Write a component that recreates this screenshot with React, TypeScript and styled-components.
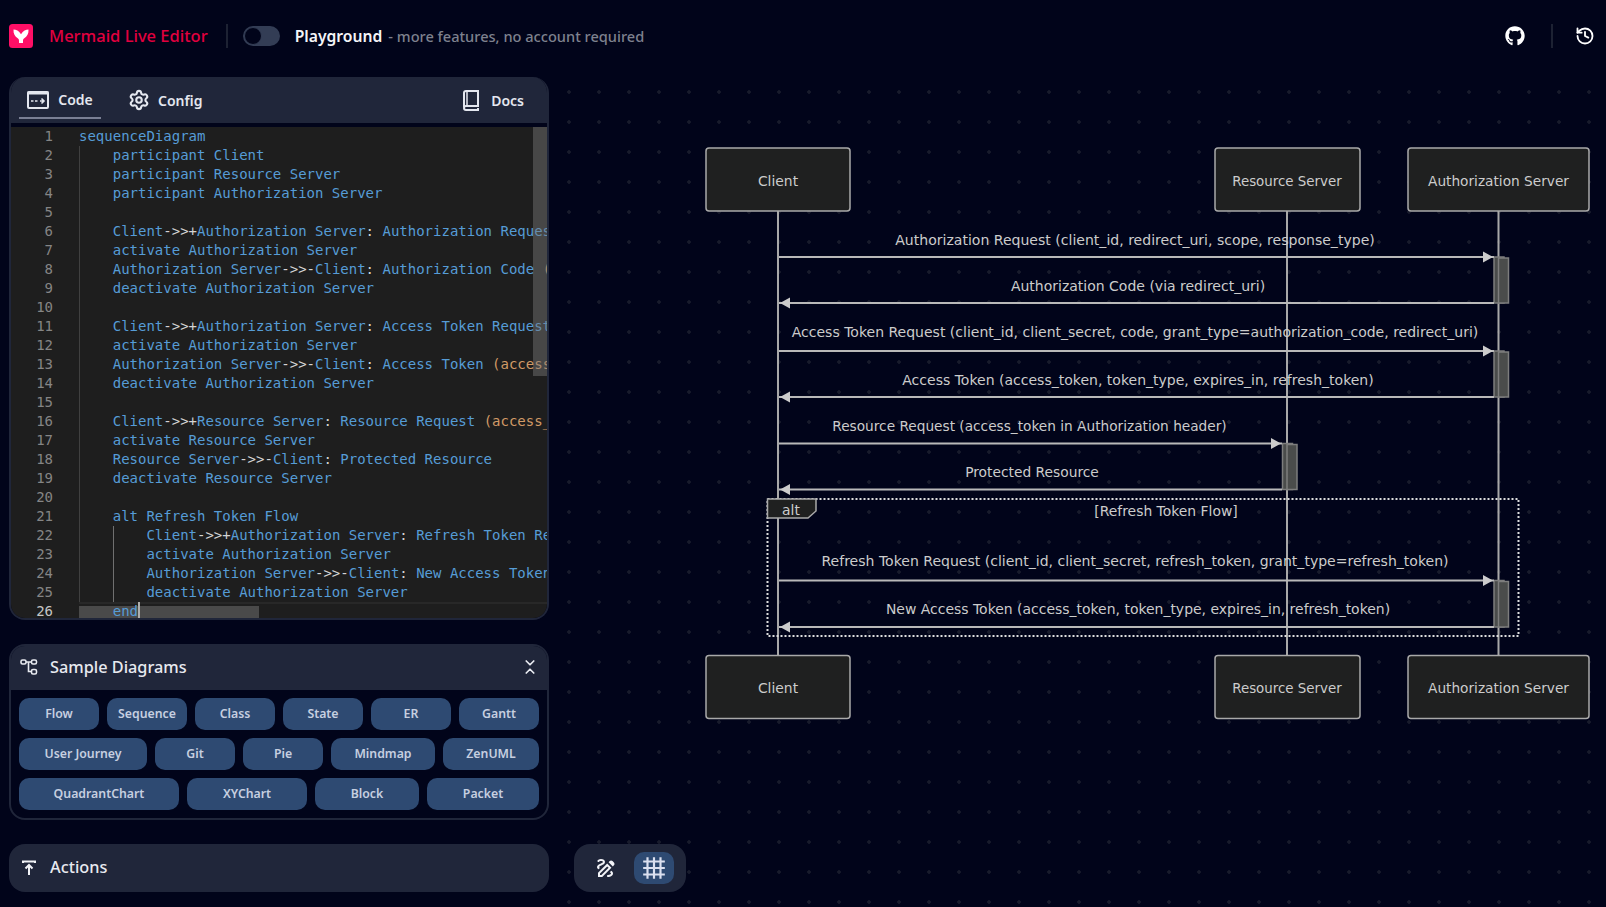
import styled, { createGlobalStyle } from "styled-components";
import { ChevronsDownUp, History, Settings } from "lucide-react";
import { FaGithub } from "react-icons/fa";
import { MdGrid4X4, MdOutlineDraw } from "react-icons/md";

const GlobalStyle = createGlobalStyle`
	html, body {
		margin: 0;
		height: 100%;
		background: #01041a;
		overflow: hidden;
	}
	* {
		box-sizing: border-box;
	}
`;

const CODE = [
	"sequenceDiagram",
	"    participant Client",
	"    participant Resource Server",
	"    participant Authorization Server",
	"",
	"    Client->>+Authorization Server: Authorization Request (client_id, redirect_uri, scope, response_type)",
	"    activate Authorization Server",
	"    Authorization Server->>-Client: Authorization Code (via redirect_uri)",
	"    deactivate Authorization Server",
	"",
	"    Client->>+Authorization Server: Access Token Request (client_id, client_secret, code)",
	"    activate Authorization Server",
	"    Authorization Server->>-Client: Access Token (access_token, token_type, expires_in, refresh_token)",
	"    deactivate Authorization Server",
	"",
	"    Client->>+Resource Server: Resource Request (access_token in Authorization header)",
	"    activate Resource Server",
	"    Resource Server->>-Client: Protected Resource",
	"    deactivate Resource Server",
	"",
	"    alt Refresh Token Flow",
	"        Client->>+Authorization Server: Refresh Token Request (client_id, client_secret)",
	"        activate Authorization Server",
	"        Authorization Server->>-Client: New Access Token (access_token, token_type)",
	"        deactivate Authorization Server",
	"    end",
];

const SAMPLE_ROWS = [
	[["Flow", 80], ["Sequence", 80], ["Class", 80], ["State", 80], ["ER", 80], ["Gantt", 80]],
	[["User Journey", 128], ["Git", 80], ["Pie", 80], ["Mindmap", 104], ["ZenUML", 96]],
	[["QuadrantChart", 160], ["XYChart", 120], ["Block", 104], ["Packet", 112]],
] as [string, number][][];

const ACTORS = [
	{ name: "Client", x: 706, w: 144, cx: 778, size: 13.9 },
	{ name: "Resource Server", x: 1215, w: 145, cx: 1287, size: 13.4 },
	{ name: "Authorization Server", x: 1408, w: 181, cx: 1498.5, size: 13.7 },
];

const MESSAGES = [
	{ text: "Authorization Request (client_id, redirect_uri, scope, response_type)", cx: 1135, base: 245, y: 257, x2: 1494, right: true, size: 14.05 },
	{ text: "Authorization Code (via redirect_uri)", cx: 1138, base: 291, y: 303, x2: 1494, right: false, size: 14 },
	{ text: "Access Token Request (client_id, client_secret, code, grant_type=authorization_code, redirect_uri)", cx: 1135, base: 337, y: 351, x2: 1494, right: true, size: 14.03 },
	{ text: "Access Token (access_token, token_type, expires_in, refresh_token)", cx: 1138, base: 385, y: 397, x2: 1494, right: false, size: 14.02 },
	{ text: "Resource Request (access_token in Authorization header)", cx: 1029.5, base: 431, y: 443.5, x2: 1282, right: true, size: 13.7 },
	{ text: "Protected Resource", cx: 1032, base: 477, y: 489.5, x2: 1282, right: false, size: 13.8 },
	{ text: "Refresh Token Request (client_id, client_secret, refresh_token, grant_type=refresh_token)", cx: 1135, base: 566, y: 580.5, x2: 1494, right: true, size: 14.04 },
	{ text: "New Access Token (access_token, token_type, expires_in, refresh_token)", cx: 1138, base: 614, y: 627, x2: 1494, right: false, size: 13.96 },
];

const ACTIVATIONS = [
	{ x: 1494, y: 257, h: 46 },
	{ x: 1494, y: 351, h: 46 },
	{ x: 1282.5, y: 443.5, h: 46 },
	{ x: 1494, y: 580.5, h: 46.5 },
];

// colours the arrows and the bracketed part like the monaco mermaid grammar
const renderTokens = (line: string) =>
	line.split(/(->>|[+:]|-(?=Client)|\(.*\))/).map((part, i) => {
		if (part.startsWith("(")) return <Paren key={i}>{part}</Paren>;
		if (/^(->>|\+|:|-)$/.test(part)) return <Operator key={i}>{part}</Operator>;
		return part;
	});

const App = () => {
	return (
		<Page>
			<GlobalStyle />
			<Header>
				<LogoIcon viewBox="0 0 24 24">
					<rect width="24" height="24" rx="3.5" fill="#ff0f66" />
					<path
						d="M4.5 5.500c2.600 0 5.400 1.400 7.500 4.800C14.100 6.900 16.900 5.500 19.500 5.500c.3 4.200-1.500 7.200-4.200 8.800-.9.600-1.300 1.400-1.300 2.400v2.300h-4v-2.300c0-1-.4-1.800-1.300-2.400C6 12.700 4.200 9.700 4.500 5.500z"
						fill="#fff"
					/>
				</LogoIcon>
				<Title>Mermaid Live Editor</Title>
				<TitleDivider />
				<Toggle>
					<Knob />
				</Toggle>
				<Playground>Playground</Playground>
				<Tagline>- more features, no account required</Tagline>
				<HeaderRight>
					<FaGithub size={20} />
					<RightDivider />
					<History size={20} strokeWidth={2.2} />
				</HeaderRight>
			</Header>

			<Main>
				<Sidebar>
					<EditorPanel>
						<Tabs>
							<Tab $active>
								<svg width="22" height="18" viewBox="0 0 22 18" fill="none" stroke="currentColor">
									<rect x="1" y="1" width="20" height="16" rx="1" strokeWidth="2" />
									<rect x="1" y="1" width="20" height="2" fill="currentColor" strokeWidth="1" />
									<path d="M4 10h2.500M8 10h2.500M13 10h3.500M14.500 7.500l2.500 2.500-2.500 2.500" strokeWidth="1.600" />
								</svg>
								Code
							</Tab>
							<Tab>
								<Settings size={22} strokeWidth={2.3} />
								Config
							</Tab>
							<DocsLink>
								<svg width="18" height="21" viewBox="0 0 18 21" fill="none" stroke="currentColor" strokeWidth="2">
									<path d="M2 17V3a2 2 0 0 1 2-2h12v15H4a2 2 0 0 0-2 2 2 2 0 0 0 2 2h12v-2" />
									<path d="M5 1v15" strokeWidth="1.500" />
								</svg>
								Docs
							</DocsLink>
						</Tabs>
						<Editor>
							<Gutter>
								{CODE.map((_, i) => (
									<LineNumber key={i} $current={i === CODE.length - 1}>
										{i + 1}
									</LineNumber>
								))}
							</Gutter>
							<CodeArea>
								<OuterGuide />
								<InnerGuide />
								<CurrentLine />
								<Selection />
								<Caret />
								{CODE.map((line, i) => (
									<CodeLine key={i}>{renderTokens(line)}</CodeLine>
								))}
							</CodeArea>
							<ScrollThumb />
						</Editor>
					</EditorPanel>

					<SamplePanel>
						<PanelHeader>
							<svg width="18" height="18" viewBox="0 0 18 18" fill="none" stroke="currentColor" strokeWidth="1.600">
								<rect x="1" y="2" width="5" height="4" rx="1.500" />
								<rect x="11.500" y="2" width="5" height="4" rx="1.500" />
								<rect x="11.500" y="11.500" width="5" height="4.500" rx="1.500" />
								<path d="M6 4h5.500M8.500 4v9.500h3" />
							</svg>
							<PanelTitle>Sample Diagrams</PanelTitle>
							<CollapseIcon>
								<ChevronsDownUp size={18} strokeWidth={2.3} />
							</CollapseIcon>
						</PanelHeader>
						<SampleBody>
							{SAMPLE_ROWS.map((row, r) => (
								<SampleRow key={r}>
									{row.map(([label, width]) => (
										<SampleChip key={label} $width={width}>
											{label}
										</SampleChip>
									))}
								</SampleRow>
							))}
						</SampleBody>
					</SamplePanel>

					<ActionsPanel>
						<svg width="18" height="18" viewBox="0 0 18 18" fill="none" stroke="currentColor" strokeWidth="2">
							<path d="M3 5V3.500h12V5M9 17V7M5.500 10.500 9 7l3.500 3.500" />
						</svg>
						<PanelTitle>Actions</PanelTitle>
					</ActionsPanel>
				</Sidebar>

				<Canvas>
					<DiagramSvg viewBox="558 72 1048 835" width="1048" height="835">
						{ACTORS.map((a) => (
							<Lifeline key={a.name} x1={a.cx} x2={a.cx} y1={211} y2={655} />
						))}
						{ACTORS.map((a) => (
							<g key={a.name}>
								<ActorBox x={a.x} y={148} width={a.w} height={63} rx={3} />
								<Label x={a.cx} y={186} textAnchor="middle" $size={a.size}>{a.name}</Label>
								<ActorBox x={a.x} y={655.5} width={a.w} height={63} rx={3} />
								<Label x={a.cx} y={693} textAnchor="middle" $size={a.size}>{a.name}</Label>
							</g>
						))}
						{ACTIVATIONS.map((b) => (
							<g key={b.y}>
								<ActivationBox x={b.x} y={b.y} width={10} height={b.h} />
								<ActivationBox x={b.x + 4.5} y={b.y + 1} width={10} height={b.h - 1} />
							</g>
						))}
						{MESSAGES.map((m) => (
							<g key={m.text}>
								<Label x={m.cx} y={m.base} textAnchor="middle" $size={m.size}>{m.text}</Label>
								<MessageLine x1={779} x2={m.x2} y1={m.y} y2={m.y} />
								<ArrowHead
									points={
										m.right
											? `${m.x2 - 11},${m.y - 5.5} ${m.x2 - 1},${m.y} ${m.x2 - 11},${m.y + 5.5}`
											: `${790},${m.y - 5.5} ${780},${m.y} ${790},${m.y + 5.5}`
									}
								/>
							</g>
						))}
						<AltFrame x={767.5} y={499} width={751} height={137} />
						<AltTag points="767.500,499 816,499 816,511 808,518 767.500,518" />
						<Label x={791} y={515} textAnchor="middle">alt</Label>
						<Label x={1166} y={516} textAnchor="middle">[Refresh Token Flow]</Label>
					</DiagramSvg>

					<ViewToolbar>
						<ToolButton>
							<MdOutlineDraw size={24} />
						</ToolButton>
						<ToolButton $active>
							<MdGrid4X4 size={26} />
						</ToolButton>
					</ViewToolbar>
				</Canvas>
			</Main>
		</Page>
	);
};

export default App;

const Page = styled.div`
	width: 100%;
	height: 100vh;
	display: flex;
	flex-direction: column;
	background: #01041a;
	font-family: "Noto Sans", sans-serif;
`;

const Header = styled.header`
	height: 72px;
	flex-shrink: 0;
	display: flex;
	align-items: center;
	padding-left: 9px;
	padding-right: 11px;
	color: #fff;
`;

const LogoIcon = styled.svg`
	width: 24px;
	height: 24px;
	margin-right: 16px;
`;

const Title = styled.span`
	font-size: 16.5px;
	font-weight: 500;
	color: #e2003f;
	padding-bottom: 1px;
`;

const TitleDivider = styled.div`
	width: 2px;
	height: 24px;
	background: #1d2233;
	margin: 0 15px 0 18px;
`;

const RightDivider = styled.div`
	width: 2px;
	height: 24px;
	background: #1d2233;
	margin: 0 22px 0 26px;
`;

const Toggle = styled.div`
	width: 37px;
	height: 20px;
	border-radius: 10px;
	background: #333d55;
	margin-right: 15px;
	padding: 1px;
`;

const Knob = styled.div`
	width: 18px;
	height: 18px;
	border-radius: 50%;
	background: #01041a;
	border: 1px solid #333d55;
`;

const Playground = styled.span`
	font-size: 15.7px;
	font-weight: 600;
	color: #f4f5f8;
	margin-right: 6px;
`;

const Tagline = styled.span`
	font-size: 14.6px;
	font-weight: 500;
	color: #7e818e;
`;

const HeaderRight = styled.div`
	margin-left: auto;
	display: flex;
	align-items: center;
`;

const Main = styled.main`
	flex: 1;
	min-height: 0;
	display: flex;
`;

const Sidebar = styled.div`
	width: 558px;
	flex-shrink: 0;
	padding: 5px 9px 15px;
	display: flex;
	flex-direction: column;
	gap: 24px;
`;

const EditorPanel = styled.section`
	height: 543px;
	flex-shrink: 0;
	display: flex;
	flex-direction: column;
	background: #01041a;
	border: 2px solid #20263a;
	border-top: none;
	border-radius: 16px;
	overflow: hidden;
`;

const Tabs = styled.div`
	height: 46px;
	flex-shrink: 0;
	display: flex;
	align-items: stretch;
	background: #20263a;
	margin: 0 -2px 4px;
	padding-left: 10px;
`;

const Tab = styled.div<{ $active?: boolean }>`
	width: ${(props) => (props.$active ? "82px" : "auto")};
	height: ${(props) => (props.$active ? "42px" : "auto")};
	display: flex;
	align-items: center;
	justify-content: center;
	gap: ${(props) => (props.$active ? "9px" : "8px")};
	margin-right: 27px;
	padding-top: ${(props) => (props.$active ? "5px" : "0")};
	font-size: 14px;
	font-weight: 600;
	color: #e4e7ef;
	border-bottom: ${(props) => (props.$active ? "2px solid #7a7f94" : "none")};
`;

const DocsLink = styled.div`
	margin-left: auto;
	padding-right: 25px;
	padding-top: 1px;
	display: flex;
	align-items: center;
	gap: 11px;
	font-size: 14px;
	font-weight: 600;
	color: #e4e7ef;
`;

const Editor = styled.div`
	flex: 1;
	min-height: 0;
	position: relative;
	display: flex;
	overflow: hidden;
	background: #1e1e1e;
	font-family: "DejaVu Sans Mono", monospace;
	font-size: 14px;
	line-height: 19px;
`;

const Gutter = styled.div`
	width: 42px;
	flex-shrink: 0;
	margin-right: 26px;
`;

const LineNumber = styled.div<{ $current?: boolean }>`
	height: 19px;
	text-align: right;
	color: ${(props) => (props.$current ? "#c6c6c6" : "#858585")};
`;

const CodeArea = styled.div`
	flex: 1;
	min-width: 0;
	position: relative;
	color: #569cd6;
	overflow: hidden;
`;

const CodeLine = styled.div`
	position: relative;
	height: 19px;
	white-space: pre;
`;

const Operator = styled.span`
	color: #d4d4d4;
`;

const Paren = styled.span`
	color: #d19a66;
`;

const OuterGuide = styled.div`
	position: absolute;
	left: 0;
	top: 19px;
	width: 1px;
	height: 456px;
	background: #404040;
`;

const InnerGuide = styled.div`
	position: absolute;
	left: 34px;
	top: 399px;
	width: 1px;
	height: 76px;
	background: #707070;
`;

const CurrentLine = styled.div`
	position: absolute;
	left: -68px;
	right: 0;
	top: 475px;
	height: 19px;
	border-top: 2px solid #282828;
`;

const Selection = styled.div`
	position: absolute;
	left: 0;
	top: 479px;
	width: 180px;
	height: 14px;
	background: #4a4a4a;
`;

const Caret = styled.div`
	position: absolute;
	left: 59px;
	top: 475px;
	width: 2px;
	height: 19px;
	background: #aeafad;
	z-index: 1;
`;

const ScrollThumb = styled.div`
	position: absolute;
	top: 0;
	right: 0;
	width: 14px;
	height: 249px;
	background: rgba(121, 121, 121, 0.45);
`;

const SamplePanel = styled.section`
	height: 176px;
	flex-shrink: 0;
	display: flex;
	flex-direction: column;
	border: 2px solid #20263a;
	border-radius: 16px;
	overflow: hidden;
`;

const PanelHeader = styled.div`
	height: 44px;
	flex-shrink: 0;
	display: flex;
	align-items: center;
	gap: 12px;
	padding: 0 8px 2px 9px;
	background: #20263a;
	color: #e8eaf0;
`;

const PanelTitle = styled.span`
	font-size: 16.3px;
	font-weight: 500;
	color: #e8eaf0;
`;

const CollapseIcon = styled.div`
	margin-left: auto;
	display: flex;
`;

const SampleBody = styled.div`
	flex: 1;
	display: flex;
	flex-direction: column;
	gap: 8px;
	padding: 8px 8px 0;
`;

const SampleRow = styled.div`
	display: flex;
	gap: 8px;
`;

const SampleChip = styled.button<{ $width: number }>`
	width: ${(props) => props.$width}px;
	height: 32px;
	flex-shrink: 0;
	padding: 0 0 2px;
	border: none;
	border-radius: 10px;
	background: #2e4a72;
	color: #c6cfe0;
	font-family: "Noto Sans", sans-serif;
	font-size: 12.3px;
	font-weight: 600;
`;

const ActionsPanel = styled.section`
	height: 48px;
	flex-shrink: 0;
	display: flex;
	align-items: center;
	gap: 12px;
	padding: 0 0 2px 11px;
	border-radius: 16px;
	background: #20263a;
	color: #f2f3f7;
`;

const Canvas = styled.div`
	flex: 1;
	position: relative;
	min-width: 0;
	background-image: radial-gradient(circle, #181b2c 1.5px, transparent 2px);
	background-size: 30px 30px;
	background-position: -4px 5px;
`;

const DiagramSvg = styled.svg`
	display: block;
	font-family: "DejaVu Sans", sans-serif;
`;

const Label = styled.text<{ $size?: number }>`
	font-size: ${(props) => props.$size ?? 13.9}px;
	fill: #cccccc;
`;

const ActorBox = styled.rect`
	fill: #1f2020;
	stroke: #a9a9a9;
	stroke-width: 1.5;
`;

const Lifeline = styled.line`
	stroke: #a8a8a8;
	stroke-width: 2;
`;

const MessageLine = styled.line`
	stroke: #b9b9b9;
	stroke-width: 2;
`;

const ArrowHead = styled.polygon`
	fill: #cccccc;
`;

const ActivationBox = styled.rect`
	fill: #4a4c4b;
	stroke: #7d7d7d;
	stroke-width: 1.5;
`;

const AltFrame = styled.rect`
	fill: none;
	stroke: #dddddd;
	stroke-width: 2;
	stroke-dasharray: 2 2;
`;

const AltTag = styled.polygon`
	fill: #1f2020;
	stroke: #a9a9a9;
	stroke-width: 1.5;
`;

const ViewToolbar = styled.div`
	position: absolute;
	left: 16px;
	bottom: 15px;
	width: 112px;
	height: 48px;
	display: flex;
	align-items: center;
	gap: 8px;
	padding: 0 12px;
	border-radius: 16px;
	background: #20263a;
`;

const ToolButton = styled.div<{ $active?: boolean }>`
	width: 40px;
	height: 32px;
	display: flex;
	align-items: center;
	justify-content: center;
	border-radius: 10px;
	background: ${(props) => (props.$active ? "#2e4a72" : "transparent")};
	color: ${(props) => (props.$active ? "#dbe0f0" : "#f2f3f7")};
`;
